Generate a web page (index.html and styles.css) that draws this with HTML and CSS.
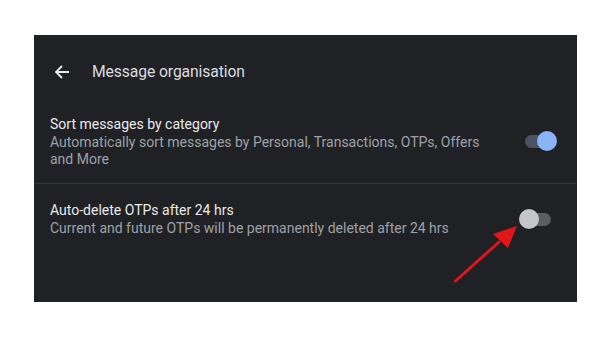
FILE: index.html
```html
<!DOCTYPE html>
<html>
<head>
<meta charset="utf-8">
<link rel="stylesheet" href="styles.css">
</head>
<body>
<div class="panel">
  <div class="header">
    <svg class="back" width="16" height="16" viewBox="0 0 16 16"><path d="M15 8H2.5M8 2L2 8l6 6" fill="none" stroke="#e8eaed" stroke-width="1.8"/></svg>
    <span class="title">Message organisation</span>
  </div>
  <div class="row row1">
    <div class="texts">
      <div class="rtitle">Sort messages by category</div>
      <div class="rdesc">Automatically sort messages by Personal, Transactions, OTPs, Offers and More</div>
    </div>
    <div class="toggle on"><span class="track"></span><span class="thumb"></span></div>
  </div>
  <div class="divider"></div>
  <div class="row row2">
    <div class="texts">
      <div class="rtitle">Auto-delete OTPs after 24 hrs</div>
      <div class="rdesc">Current and future OTPs will be permanently deleted after 24 hrs</div>
    </div>
    <div class="toggle off"><span class="track"></span><span class="thumb"></span></div>
  </div>
  <svg class="arrow" width="80" height="70" viewBox="0 0 80 70"><path d="M1.5 66L45 27" stroke="#e0161b" stroke-width="3" stroke-linecap="round"/><path d="M63 11L39 19L54 33Z" fill="#e0161b"/></svg>
</div>
</body>
</html>
```
FILE: styles.css
```css
html, body { margin: 0; padding: 0; background: #ffffff; }
body { font-family: Roboto, "Noto Sans", sans-serif; }
.panel {
  position: relative;
  margin: 35px 0 0 34px;
  width: 543px;
  height: 267px;
  background: #202124;
  box-sizing: border-box;
}
.header {
  display: flex;
  align-items: center;
  height: 72px;
  padding-left: 20px;
}
.back { margin-right: 22px; margin-top: 1px; }
.title { color: #dadce0; font-size: 15.7px; letter-spacing: -0.1px; }
.row {
  display: flex;
  align-items: flex-start;
  padding: 0 20px 0 16px;
  box-sizing: border-box;
}
.row1 { height: 76px; padding-top: 8px; }
.row2 { height: 83px; padding-top: 17px; }
.texts { flex: 1; }
.rtitle { color: #e8eaed; font-size: 14px; line-height: 18px; }
.rdesc { color: #9ea2a7; font-size: 14px; line-height: 16.5px; margin-top: 1px; max-width: 440px; }
.divider { height: 1px; background: #34363a; }
.toggle { position: relative; width: 32px; height: 20px; flex: none; margin-top: 16px; }
.track { position: absolute; left: 4px; top: 3.5px; width: 26px; height: 13px; border-radius: 7px; }
.thumb { position: absolute; top: 0; width: 20px; height: 20px; border-radius: 50%; }
.on .track { left: 0; background: #4b5263; }
.on .thumb { right: 0; background: #8ab4f8; }
.off { margin-right: 6px; margin-top: 8px; }
.off .track { left: 6px; background: #5b5d61; }
.off .thumb { left: 0; background: #c4c6c9; }
.arrow { position: absolute; left: 420px; top: 180px; }
```
